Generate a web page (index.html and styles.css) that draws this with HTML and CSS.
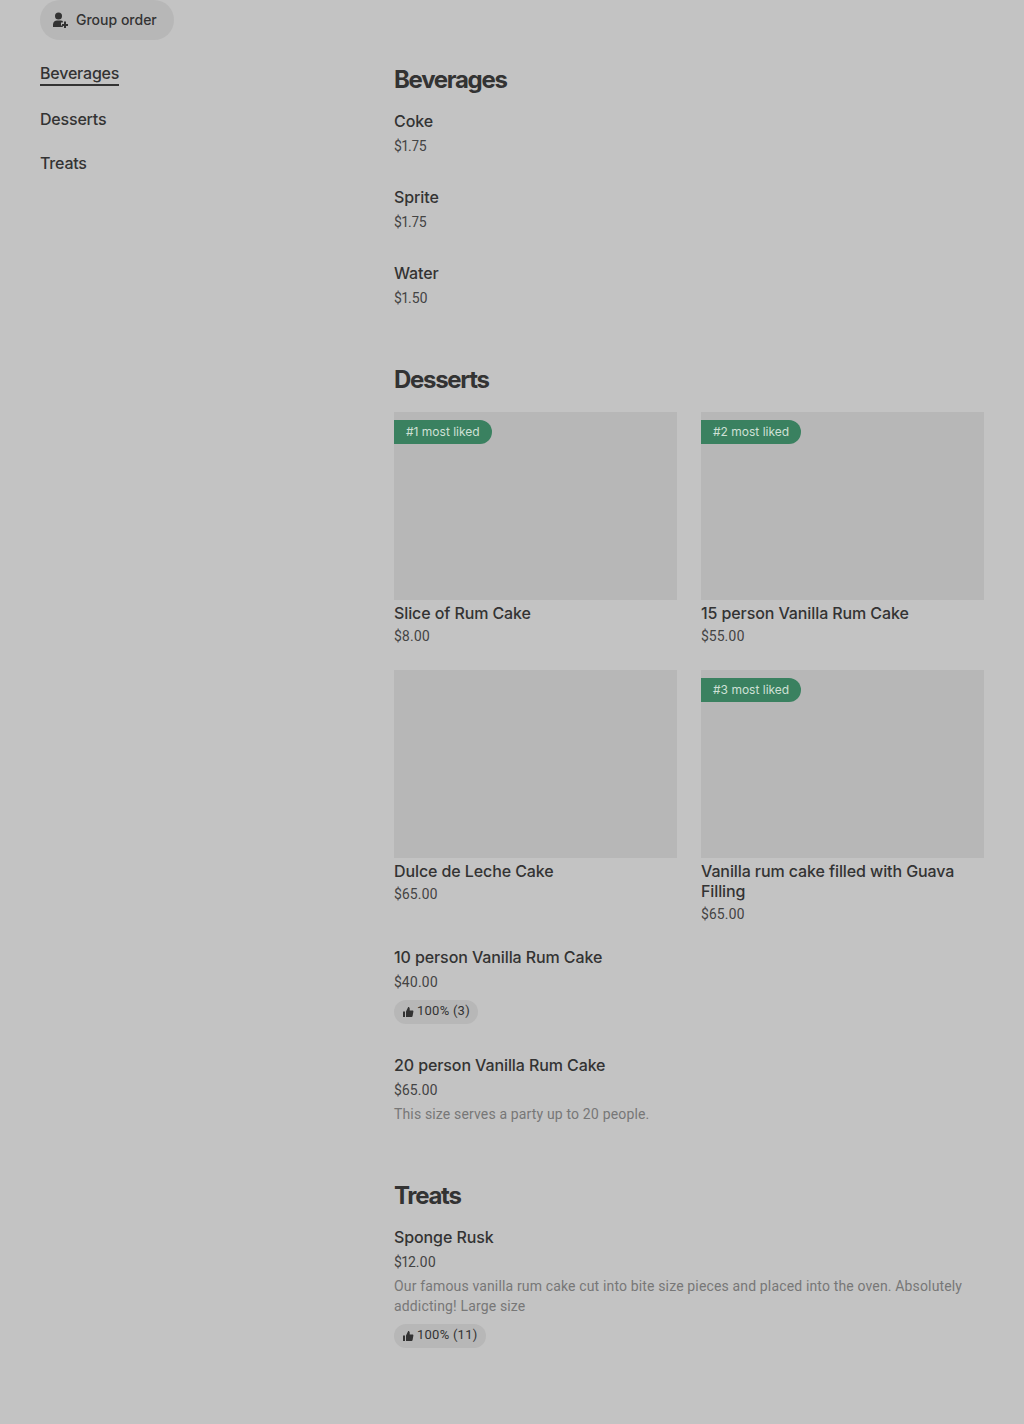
FILE: index.html
```html
<!DOCTYPE html>
<html lang="en">
<head>
  <meta charset="UTF-8">
  <meta name="viewport" content="width=device-width, initial-scale=1.0">
  <title>Menu</title>
  <link rel="stylesheet" href="styles.css">
</head>
<body>
  <div class="page">
    <button class="group-button">
      <svg class="group-icon" viewBox="0 0 16 16" width="16" height="16"><circle cx="6.5" cy="4" r="3.5"/><path d="M1 15v-2.5C1 10 3 8.5 5 8.5h4c.7 0 1.3.2 1.8.5v1.5H9v3h1.8V15z"/><path d="M12 9.5h2V12h2v2h-2v2.5h-2V14h-2v-2h2z"/></svg>
      Group order
    </button>

    <div class="layout">
      <!-- Category links -->
      <nav class="side-nav">
        <a class="side-link active">Beverages</a>
        <a class="side-link">Desserts</a>
        <a class="side-link">Treats</a>
      </nav>

      <main class="menu">
        <section class="menu-section">
          <h2>Beverages</h2>
          <div class="item">
            <div class="item-name">Coke</div>
            <div class="item-price">$1.75</div>
          </div>
          <div class="item">
            <div class="item-name">Sprite</div>
            <div class="item-price">$1.75</div>
          </div>
          <div class="item">
            <div class="item-name">Water</div>
            <div class="item-price">$1.50</div>
          </div>
        </section>

        <section class="menu-section">
          <h2>Desserts</h2>
          <div class="card-grid">
            <div class="card">
              <div class="card-image"><span class="badge">#1 most liked</span></div>
              <div class="card-name">Slice of Rum Cake</div>
              <div class="card-price">$8.00</div>
            </div>
            <div class="card">
              <div class="card-image"><span class="badge">#2 most liked</span></div>
              <div class="card-name">15 person Vanilla Rum Cake</div>
              <div class="card-price">$55.00</div>
            </div>
            <div class="card">
              <div class="card-image"></div>
              <div class="card-name">Dulce de Leche Cake</div>
              <div class="card-price">$65.00</div>
            </div>
            <div class="card">
              <div class="card-image"><span class="badge">#3 most liked</span></div>
              <div class="card-name">Vanilla rum cake filled with Guava Filling</div>
              <div class="card-price">$65.00</div>
            </div>
          </div>
          <div class="item">
            <div class="item-name">10 person Vanilla Rum Cake</div>
            <div class="item-price">$40.00</div>
            <div class="rating">
              <svg viewBox="0 0 12 12" width="12" height="12"><path d="M1 5.5h2V11H1z"/><path d="M4 5.5 6.2 1c.9 0 1.5.7 1.5 1.6V4.5h2.8c.6 0 1 .5.9 1.1l-.8 4.5c-.1.5-.5.9-1 .9H4z"/></svg>
              <span class="rating-text">100% (3)</span>
            </div>
          </div>
          <div class="item">
            <div class="item-name">20 person Vanilla Rum Cake</div>
            <div class="item-price">$65.00</div>
            <div class="item-desc">This size serves a party up to 20 people.</div>
          </div>
        </section>

        <section class="menu-section">
          <h2>Treats</h2>
          <div class="item">
            <div class="item-name">Sponge Rusk</div>
            <div class="item-price">$12.00</div>
            <div class="item-desc">Our famous vanilla rum cake cut into bite size pieces and placed into the oven. Absolutely addicting! Large size</div>
            <div class="rating">
              <svg viewBox="0 0 12 12" width="12" height="12"><path d="M1 5.5h2V11H1z"/><path d="M4 5.5 6.2 1c.9 0 1.5.7 1.5 1.6V4.5h2.8c.6 0 1 .5.9 1.1l-.8 4.5c-.1.5-.5.9-1 .9H4z"/></svg>
              <span class="rating-text">100% (11)</span>
            </div>
          </div>
        </section>
      </main>
    </div>
  </div>
</body>
</html>
```
FILE: styles.css
```css
/* Reset default styles */
* {
  margin: 0;
  padding: 0;
  box-sizing: border-box;
  font-family: Inter, "Liberation Sans", sans-serif;
}

body {
  background: #c3c3c3;
  color: #333;
}

.page {
  padding: 0 40px;
  height: 1424px;
  overflow: hidden;
}

.group-button {
  display: flex;
  align-items: center;
  gap: 8px;
  width: 134px;
  height: 40px;
  padding: 0 0 1px 12px;
  border: none;
  border-radius: 20px;
  background: #b7b7b7;
  color: #333;
  font-size: 14px;
  font-weight: 500;
}

.group-icon {
  fill: #333;
}

.layout {
  display: flex;
}

/* Category links */
.side-nav {
  display: flex;
  flex-direction: column;
  align-items: flex-start;
  width: 354px;
  padding-top: 23px;
}

.side-link {
  font-size: 16px;
  font-weight: 500;
  line-height: 20px;
  letter-spacing: -0.2px;
  margin-bottom: 24px;
  color: #333;
}

.side-link.active {
  border-bottom: 2px solid #333;
  padding-bottom: 1px;
  margin-bottom: 23px;
}

.menu {
  width: 590px;
}

.menu-section {
  padding-top: 24px;
  padding-bottom: 16px;
}

.menu-section h2 {
  font-size: 24px;
  font-weight: 700;
  line-height: 32px;
  letter-spacing: -1.3px;
}

/* List rows */
.item {
  padding: 15px 0 16px;
}

.item-name,
.card-name {
  font-size: 16px;
  font-weight: 500;
  line-height: 20px;
  letter-spacing: -0.1px;
}

.item-price,
.card-price,
.item-desc {
  font-family: Roboto, sans-serif;
  font-size: 14px;
  line-height: 20px;
  font-variant-numeric: proportional-nums;
  color: #444;
}

.item-name {
  margin-bottom: 5px;
}

.item-desc {
  margin-top: 4px;
  letter-spacing: 0.15px;
  color: #777;
}

.rating {
  display: flex;
  width: fit-content;
  align-items: center;
  gap: 3px;
  height: 24px;
  margin-top: 8px;
  padding: 0 8px;
  border-radius: 12px;
  background: #b7b7b7;
  color: #333;
}

.rating-text {
  font-family: Roboto, sans-serif;
  font-size: 13px;
  line-height: 22px;
  height: 24px;
  letter-spacing: 0.25px;
}

.rating svg {
  fill: #333;
}

/* Dessert cards */
.card-grid {
  display: grid;
  grid-template-columns: 283px 283px;
  column-gap: 24px;
  row-gap: 24px;
  padding-top: 16px;
  padding-bottom: 8px;
}

.card-image {
  position: relative;
  height: 188px;
  margin-bottom: 3px;
  background: #b7b7b7;
}

.badge {
  position: absolute;
  top: 8px;
  left: 0;
  height: 24px;
  padding: 0 12px;
  border-radius: 0 12px 12px 0;
  background: #3a8160;
  color: #cfe0d6;
  font-size: 12px;
  line-height: 24px;
}

.card-price {
  margin-top: 3px;
}
```
